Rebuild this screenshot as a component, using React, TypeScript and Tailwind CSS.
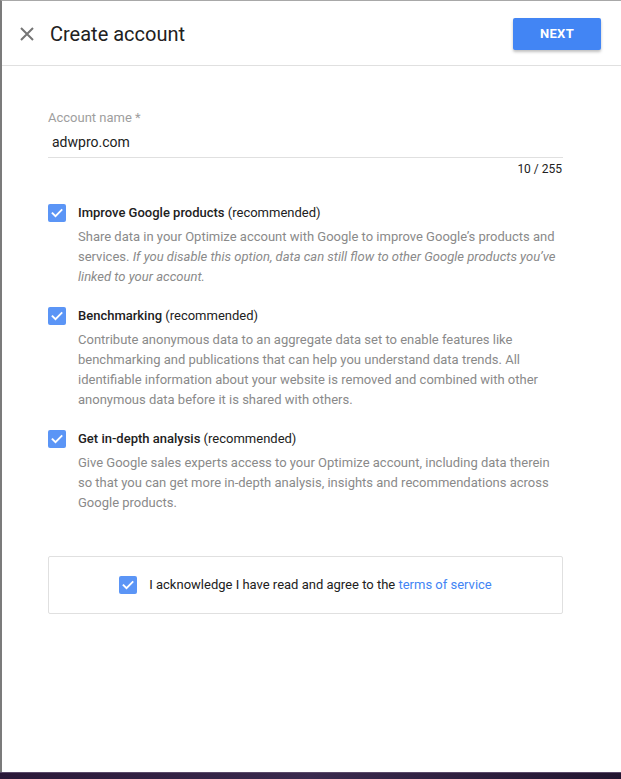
import React from "react";

const font = { fontFamily: "Roboto, 'Liberation Sans', sans-serif" };

function CheckBox() {
  return (
    <div className="w-[18px] h-[18px] rounded-[2px] bg-[#5b95f6] flex items-center justify-center shrink-0">
      <svg width="14" height="14" viewBox="0 0 14 14" fill="none">
        <path d="M2.5 7.2l3 3L11.6 4" stroke="white" strokeWidth="1.8" strokeLinecap="square" />
      </svg>
    </div>
  );
}

function Option({ title, children }: { title: string; children: React.ReactNode }) {
  return (
    <div className="flex gap-3">
      <div className="pt-[1px]">
        <CheckBox />
      </div>
      <div className="flex-1">
        <p className="text-[13px] leading-[20px] text-[#212121]">
          <span className="font-medium">{title}</span> (recommended)
        </p>
        <p className="mt-1 text-[13px] leading-[20px] text-[#8a8a8a]">{children}</p>
      </div>
    </div>
  );
}

export default function App() {
  return (
    <div className="w-[621px] h-[779px] flex flex-col bg-white overflow-hidden" style={font}>
      <div className="flex-1 border-l-2 border-t border-l-[#7b7b7b] border-t-[#a8a8a8] flex flex-col">
        {/* header */}
        <div className="h-[65px] flex items-center pl-[16px] pr-[20px] border-b border-[#e0e0e0]">
          <svg width="18" height="18" viewBox="0 0 18 18" className="mr-[14px] mt-[2px]">
            <path d="M3 3l12 12M15 3L3 15" stroke="#757575" strokeWidth="2" />
          </svg>
          <h1 className="text-[20px] text-[#212121] flex-1 mt-[2px]">Create account</h1>
          <button className="w-[88px] h-[32px] mt-[2px] rounded-[2px] bg-[#4285f4] text-white text-[13px] font-bold tracking-wide shadow-[0_2px_3px_rgba(0,0,0,0.25)]">
            NEXT
          </button>
        </div>

        {/* body */}
        <div className="pl-[46px] pr-[58px] pt-[44px]">
          <div>
            <label className="block text-[13px] leading-[16px] text-[#9e9e9e]">Account name *</label>
            <div className="mt-[6px] pl-[4px] pb-[5px] border-b border-[#e0e0e0] text-[14px] leading-[20px] text-[#212121]">
              adwpro.com
            </div>
            <div className="mt-[3px] pr-[1px] text-right text-[12px] leading-[16px] text-[#212121]">10 / 255</div>
          </div>

          <div className="mt-[26px] flex flex-col gap-[19px]">
            <Option title="Improve Google products">
              Share data in your Optimize account with Google to improve Google’s products and services.{" "}
              <i>If you disable this option, data can still flow to other Google products you’ve linked to your account.</i>
            </Option>
            <Option title="Benchmarking">
              Contribute anonymous data to an aggregate data set to enable features like benchmarking and publications
              that can help you understand data trends. All identifiable information about your website is removed and
              combined with other anonymous data before it is shared with others.
            </Option>
            <Option title="Get in-depth analysis">
              Give Google sales experts access to your Optimize account, including data therein so that you can get more
              in-depth analysis, insights and recommendations across Google products.
            </Option>
          </div>

          <div className="mt-[43px] h-[58px] border border-[#e0e0e0] rounded-[2px] flex items-center justify-center gap-3">
            <CheckBox />
            <p className="text-[13px] text-[#212121]">
              I acknowledge I have read and agree to the <span className="text-[#4285f4]">terms of service</span>
            </p>
          </div>
        </div>
      </div>
      <div className="h-[7px] bg-gradient-to-r from-[#2a1838] via-[#3a2a4e] to-[#221530] border-t border-[#5a4a6a]" />
    </div>
  );
}
